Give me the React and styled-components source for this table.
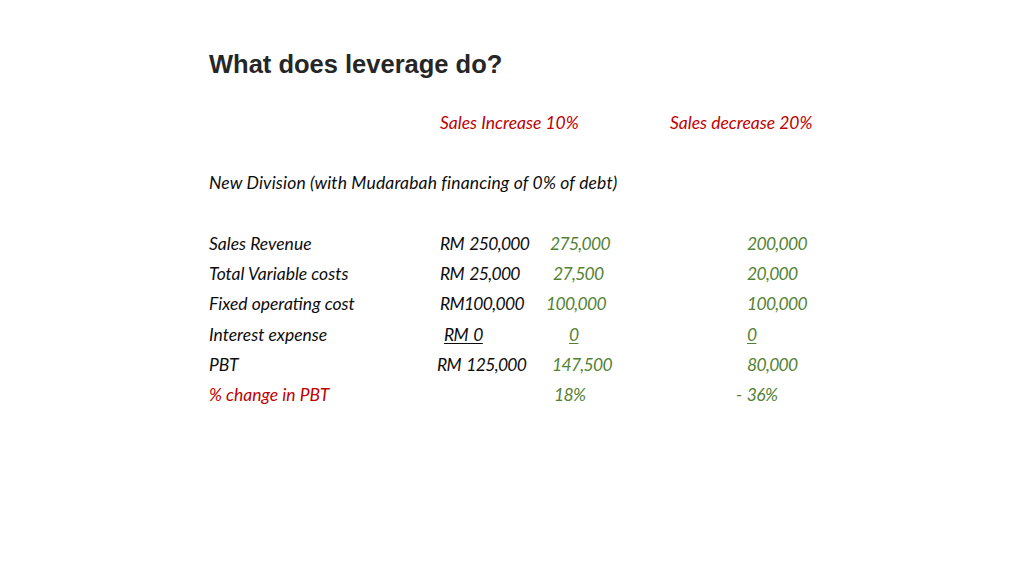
import React from 'react';
import styled, { createGlobalStyle } from 'styled-components';

const GlobalStyle = createGlobalStyle`
  html, body {
    margin: 0;
    padding: 0;
    background: #ffffff;
  }
`;

const rows = [
  { label: 'Sales Revenue', base: 'RM 250,000', up: '275,000', upShift: 4, down: '200,000' },
  { label: 'Total Variable costs', base: 'RM 25,000', up: '27,500', upShift: 7, down: '20,000' },
  { label: 'Fixed operating cost', base: 'RM100,000', up: '100,000', upShift: 0, down: '100,000' },
  { label: 'Interest expense', base: 'RM 0', baseShift: 4, up: '0', upShift: 23, down: '0', line: true },
  { label: 'PBT', base: 'RM 125,000', baseShift: -3, up: '147,500', upShift: 6, down: '80,000' },
];

const App = () => {
  return (
    <Slide>
      <GlobalStyle />
      <Title>What does leverage do?</Title>
      <Table>
        <Cell />
        <Cell tone='red'>Sales Increase 10%</Cell>
        <Cell />
        <Cell tone='red'>Sales decrease 20%</Cell>

        <Blank />

        <Cell span={4} wide>New Division (with Mudarabah financing of 0% of debt)</Cell>

        <Blank />

        {rows.map((r) => (
          <React.Fragment key={r.label}>
            <Cell>{r.label}</Cell>
            <Cell num shift={r.baseShift || 0} underline={r.line}>{r.base}</Cell>
            <Cell num tone='green' shift={r.upShift} underline={r.line}>{r.up}</Cell>
            <Cell num tone='green' shift={77} underline={r.line}>{r.down}</Cell>
          </React.Fragment>
        ))}

        <Cell tone='red'>% change in PBT</Cell>
        <Cell />
        <Cell num tone='green' shift={8}>18%</Cell>
        <Cell num tone='green' shift={66}>- 36%</Cell>
      </Table>
    </Slide>
  );
};

const colors = {
  black: '#0d0d0d',
  red: '#c00000',
  green: '#548235',
};

const Slide = styled.div`
  width: 1024px;
  height: 575px;
  box-sizing: border-box;
  padding: 49px 0 0 209px;
  background: #ffffff;
  overflow: hidden;
`;

const Title = styled.h1`
  margin: 0;
  font-family: 'Liberation Sans', Arial, sans-serif;
  font-weight: bold;
  font-size: 25.5px;
  line-height: 30px;
  color: #262626;
`;

const Table = styled.div`
  display: grid;
  grid-template-columns: 231px 106px 124px 200px;
  grid-auto-rows: 30.3px;
  margin-top: 28px;
  font-family: Lato, 'Open Sans', sans-serif;
  font-style: italic;
  font-size: 17.5px;
`;

const Cell = styled.div`
  grid-column: ${(p) => (p.span ? `span ${p.span}` : 'auto')};
  display: flex;
  align-items: center;
  white-space: pre;
  padding-left: ${(p) => (p.shift > 0 ? p.shift : 0)}px;
  margin-left: ${(p) => (p.shift < 0 ? p.shift : 0)}px;
  letter-spacing: ${(p) => (p.num ? '-0.7px' : p.wide ? '0.15px' : 'normal')};
  word-spacing: ${(p) => (p.num ? '2px' : 'normal')};
  color: ${(p) => colors[p.tone] || colors.black};
  text-decoration: ${(p) => (p.underline ? 'underline' : 'none')};
  text-underline-offset: 2px;
`;

const Blank = styled.div`
  grid-column: span 4;
`;

export default App;
